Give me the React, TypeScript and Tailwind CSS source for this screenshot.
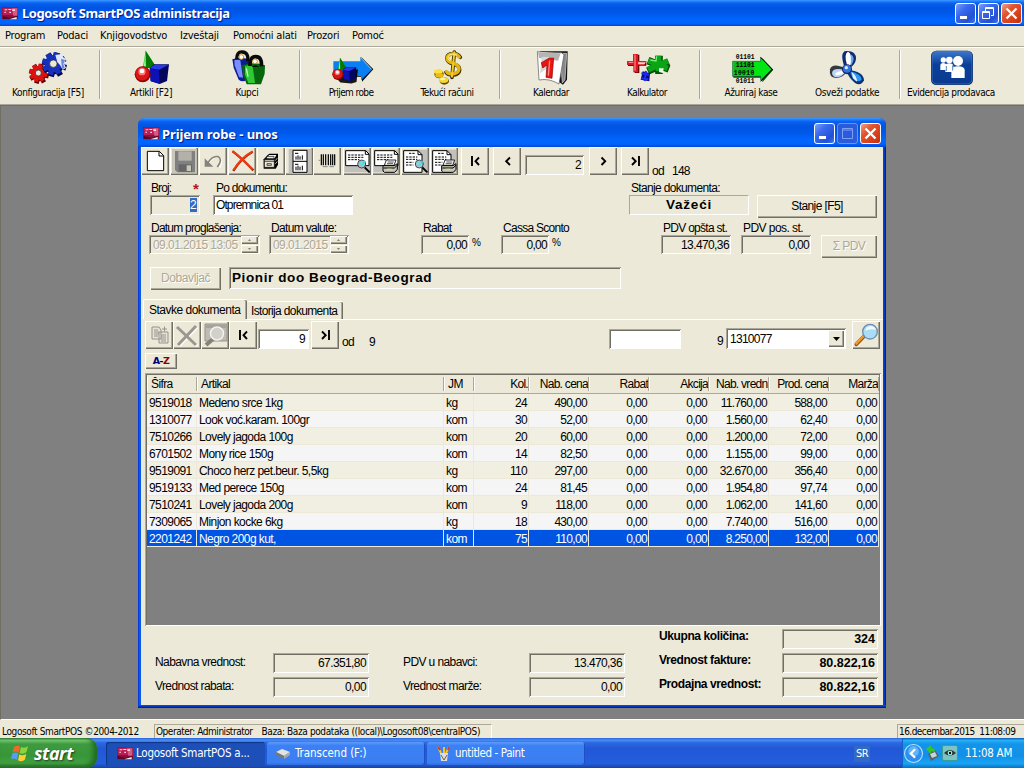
import React from "react";

type Kids = { children?: React.ReactNode };

const SUNK =
  "shadow-[inset_1px_1px_0_#aca899,inset_-1px_-1px_0_#fff,inset_2px_2px_0_#716f64]";
const RAISED =
  "bg-[#ece9d8] shadow-[inset_1px_1px_0_#fff,inset_-1px_-1px_0_#716f64,inset_-2px_-2px_0_#aca899]";
const TITLE =
  "bg-[linear-gradient(180deg,#3f97ff_0%,#1c7bff_6%,#0a5fec_13%,#0054e3_28%,#0057ea_50%,#0066ff_75%,#0064fb_90%,#0046d2_100%)]";
const SHADOWTXT = "[text-shadow:1px_1px_1px_#0a1883]";

/* ---------- small building blocks ---------- */

function Field({ cls = "", children }: Kids & { cls?: string }) {
  return (
    <div className={`shrink-0 flex items-center whitespace-pre leading-none ${SUNK} ${cls}`}>
      {children}
    </div>
  );
}

function Btn({ cls = "w-7 h-7", children }: Kids & { cls?: string }) {
  return (
    <button className={`shrink-0 flex items-center justify-center whitespace-nowrap leading-none ${RAISED} ${cls}`}>
      {children}
    </button>
  );
}

function IconBtn({ vb, cls = "w-7 h-7", children }: Kids & { vb: string; cls?: string }) {
  return (
    <Btn cls={cls}>
      <svg viewBox={vb} className="h-full w-full" preserveAspectRatio="none">
        {children}
      </svg>
    </Btn>
  );
}

function NavBtn({ kind }: { kind: "first" | "prev" | "next" | "last" }) {
  const left = kind === "first" || kind === "prev";
  return (
    <Btn>
      <svg viewBox="0 0 28 28" className="h-7 w-7" fill="none" stroke="#000" strokeWidth="1.9">
        {left ? (
          <path d={kind === "first" ? "M18 10.5L14.5 14.2 18 18" : "M17 10.5L13.2 14.2 17 18"} />
        ) : (
          <path d={kind === "last" ? "M11 10.5L14.7 14.2 11 18" : "M12.5 10.5L16.2 14.2 12.5 18"} />
        )}
        {kind === "first" && <path d="M11 9v10" />}
        {kind === "last" && <path d="M18 9v10" />}
      </svg>
    </Btn>
  );
}

function AppIcon({ cls }: { cls: string }) {
  return (
    <svg viewBox="0 0 48 39" className={`shrink-0 ${cls}`} preserveAspectRatio="none">
      <rect width="48" height="37" rx="3" fill="#8c0f3c" />
      <path d="M2 2h44v22H2z" fill="#b51f55" />
      <path d="M30 4h16v22H34z" fill="#d75a83" />
      <path d="M8 7h8v3H8zM19 6h9v3h-9zM7 14h5v3H7zM31 7h8v5h-8zM22 14h5v4h-5z" fill="#ffd9e6" />
      <path d="M2 26l22 7 22-7v10H2z" fill="#5a0723" />
      <path d="M24 36l20-6v7H24z" fill="#f3e9ee" />
    </svg>
  );
}

function CaptionButtons({ inner = false }: { inner?: boolean }) {
  const b = "w-[21px] h-[21px] rounded-[3px] border border-white flex";
  const blue = "bg-[linear-gradient(135deg,#7d9ff5_0%,#3a6af0_35%,#2350d4_75%,#3f78ee_100%)]";
  return (
    <div className="ml-auto flex gap-[2px]">
      <div className={`${b} ${blue}`}>
        <svg viewBox="0 0 19 19" className="h-full w-full"><path d="M4 12h7v3H4z" fill="#fff" /></svg>
      </div>
      {inner ? (
        <div className="flex h-[21px] w-[21px] rounded-[3px] border border-[#6f92ee] bg-[#2a5ade]">
          <svg viewBox="0 0 19 19" className="h-full w-full" fill="none" stroke="#7f9ff2"><path d="M4.5 4.5h10v10h-10zM4.5 6h10" /></svg>
        </div>
      ) : (
        <div className={`${b} ${blue}`}>
          <svg viewBox="0 0 19 19" className="h-full w-full" fill="none" stroke="#fff">
            <path d="M6.500 7V3.500h8v8H12M6.500 4.500h8M3.500 7.500h7v7h-7zM3.500 8.500h7" />
          </svg>
        </div>
      )}
      <div className={`${b} bg-[linear-gradient(135deg,#f0a088_0%,#e2532f_35%,#d13a14_80%,#b93010_100%)]`}>
        <svg viewBox="0 0 19 19" className="h-full w-full" stroke="#fff" strokeWidth="2.300"><path d="M4.500 4.500l10 10M14.500 4.500l-10 10" /></svg>
      </div>
    </div>
  );
}

/* ---------- main toolbar drawings ---------- */

const gear = (cx: number, cy: number, r: number, fill: string) => (
  <g>
    {[0, 45, 90, 135].map((a) => (
      <rect key={a} x={cx - r} y={cy - r * 0.23} width={r * 2} height={r * 0.46} fill={fill} transform={`rotate(${a + 15} ${cx} ${cy})`} />
    ))}
    <circle cx={cx} cy={cy} r={r * 0.77} fill={fill} />
    <circle cx={cx} cy={cy} r={r * 0.33} fill="#ece9d8" stroke="#222" strokeWidth="2" />
  </g>
);

const solids = (
  <g>
    <path d="M437 152l-8 48q18 10 37-3z" fill="#0cc90c" />
    <path d="M437 152l2 52q18 0 27-7z" fill="#067806" />
    <path d="M436 160l-4 38 5 2z" fill="#a8ffa8" />
    <path d="M449 204l12-11h46l-6 50-22 9-27-8z" fill="#05055e" />
    <path d="M449 206l28 5 2 40-27-8z" fill="#0c12b4" />
    <path d="M449 205l13-11h44l-28 15z" fill="#2539e8" />
    <circle cx="428" cy="223" r="24" fill="#8c0404" />
    <circle cx="427" cy="221" r="21" fill="#da1515" />
    <circle cx="426" cy="215" r="11" fill="#f77" />
    <circle cx="426" cy="213" r="7" fill="#fff" />
  </g>
);

const icons: Record<string, React.ReactNode> = {
  konf: (
    <>
      {gear(117, 221, 30, "#5c0000")}
      {gear(115, 219, 27, "#e01010")}
      {gear(163, 194, 37, "#050a4a")}
      {gear(160, 191, 34, "#1530bd")}
      <path d="M166 165l18-3 6 10 8 6-6 12 6 14-10 5-8-14-8-8z" fill="#dfe8ff" />
      <path d="M183 176l12 4-5 12 4 12-8 3z" fill="#6d86d8" />
    </>
  ),
  artikli: solids,
  kupci: (
    <>
      <path d="M697 178q25-9 50 0l3 14-10 47q-12 10-24 0l-15-36z" fill="#101d92" />
      <path d="M703 181q10-4 18 0l8 52-12-2-13-35z" fill="#7a8eff" />
      <path d="M710 178q0-24 17-22 20 2 16 28" fill="none" stroke="#0b0b0b" strokeWidth="10" />
      <circle cx="724" cy="171" r="7" fill="#fff" stroke="#d79a17" strokeWidth="3" />
      <path d="M726 196q35-12 69 0l-1 25-11 32h-43l-11-29z" fill="#06660b" />
      <path d="M735 198q11-4 23 0l7 51h-20l-10-25z" fill="#2fc936" />
      <path d="M739 205l5 25" stroke="#c4ffc0" strokeWidth="4" />
      <path d="M750 198q-1-28 17-28 20 0 17 29" fill="none" stroke="#0b0b0b" strokeWidth="11" />
      <circle cx="765" cy="184" r="7" fill="#fff" stroke="#d79a17" strokeWidth="3" />
      <path d="M754 201q12-10 24 0z" fill="#0a0a0a" />
    </>
  ),
  prijem: (
    <>
      <path d="M1005 188h79v-16l36 36-34 37v-15h-81z" fill="#000" />
      <path d="M1000 184h81v-14l36 38-34 33v-13h-83z" fill="#0a7ff2" />
      <path d="M1083 174l31 34" stroke="#78c2ff" strokeWidth="3" />
      <g transform="translate(714 67) scale(.7)">
        <g transform="translate(7 7)" opacity=".9"><path d="M449 204l58-10-6 55-22 6-47-4-20-22z" fill="#000" /></g>
        {solids}
      </g>
    </>
  ),
  tekuci: (
    <>
      <g fill="none" strokeLinecap="round">
        <path d="M181 172q-8-12-22-11-18 1-18 14t20 17q19 5 18 18-2 15-22 15-14 0-19-8M163 156l-7 76" stroke="#3b2c00" strokeWidth="11" />
        <path d="M178 171q-8-11-21-9-15 2-15 13t18 15q18 5 17 18-2 13-20 14-13 0-17-7" stroke="#e2b510" strokeWidth="10" />
        <path d="M163 157l-7 73" stroke="#f2cc27" strokeWidth="6" />
        <path d="M170 165q-14-6-23 1-8 9 3 17" stroke="#fff09a" strokeWidth="3" />
      </g>
      <ellipse cx="117" cy="222" rx="14" ry="13" fill="#6f5500" />
      <ellipse cx="115" cy="215" rx="13" ry="7" fill="#ffe03d" />
      <ellipse cx="118" cy="226" rx="12" ry="7" fill="#e6be18" />
      <ellipse cx="133" cy="243" rx="14" ry="11" fill="#5c4600" />
      <ellipse cx="131" cy="240" rx="14" ry="9" fill="#f7d632" />
      <ellipse cx="128" cy="237" rx="8" ry="4" fill="#fff5a8" />
    </>
  ),
  kalendar: (
    <>
      <path d="M420 154h83l-2 85-12 15-12-8z" fill="#111" />
      <path d="M480 160h20l-5 80-8 9z" fill="#888" stroke="#ddd" strokeWidth="2" />
      <path d="M412 155l72 3 8 6-15 88q-30-18-60-12z" fill="#fff" stroke="#555" strokeWidth="2" />
      <path d="M414 157l68 3-8 22-57-8z" fill="#b4b4b4" />
      <path d="M425 170l35 2-10 28-30 20z" fill="#d7d7d7" />
      <path d="M424 188l24-14h13l-5 61-18-3 3-37-13 9z" fill="#e8140f" stroke="#8d0000" strokeWidth="2" />
      <path d="M449 182l-4 45" stroke="#ff8b80" strokeWidth="4" />
    </>
  ),
  kalkulator: (
    <>
      <path d="M703 164h15v20h21v13h-21v22h-14v-21h-20v-13h20z" fill="#6e0000" />
      <path d="M699 162h15v21h20v12h-20v22h-14v-22h-19v-12h18z" fill="#df1720" />
      <path d="M705 164v48M686 187h14" stroke="#ff9ca0" strokeWidth="3" />
      <path d="M714 187h24l-5 6h-18z" fill="#ffd0d0" />
      <g stroke="#045007" strokeWidth="23"><path d="M777 167v55M744 182l63 25M743 213l63-27" /></g>
      <g stroke="#0aa514" strokeWidth="17"><path d="M775 167v46M745 182l58 23M744 209l60-26" /></g>
      <path d="M770 169l-2 14-17-3" stroke="#74ef74" strokeWidth="4" fill="none" />
      <path d="M777 205h14l-2 14-12-3z" fill="#e8ffe8" />
      <path d="M728 214l22 6-2 24-26-5z" fill="#08087a" />
      <path d="M724 220l23 4M723 235l22 3M738 213l-4 30" stroke="#1d2bf0" strokeWidth="6" />
    </>
  ),
  azuriraj: (
    <>
      <path d="M100 187h87v-12l33 34-33 38v-14h-87z" fill="#0a4f0a" />
      <path d="M98 184h84v-12l33 36-33 33v-12H98z" fill="#00e613" stroke="#053" strokeWidth="2" />
      <path d="M182 172l35 36-35 36" fill="none" stroke="#000" strokeWidth="3" />
      <path d="M102 187h60v32h-60z" fill="#14961c" opacity=".55" />
      <g fill="#000" fontFamily="Liberation Mono" fontWeight="700" fontSize="19">
        <text x="107" y="176" textLength="57">01101</text>
        <text x="107" y="200" textLength="57">11101</text>
        <text x="101" y="224" textLength="62">10010</text>
        <text x="107" y="248" textLength="57">01011</text>
      </g>
    </>
  ),
  osvezi: (
    <>
      <path d="M434 203q-16-45 3-50 32-2 31 24-2 16-19 28z" fill="#0d2c72" />
      <path d="M441 195q-10-34 3-40 14 6 8 40z" fill="#fff" />
      <path d="M452 163q17 9 1 34z" fill="#69a7f0" />
      <path d="M436 205q-39-18-46 3-4 25 18 26 20 0 31-17z" fill="#34383f" />
      <path d="M432 209q-35-6-36 10 1 15 20 12 14-4 20-15z" fill="#bcd5f5" />
      <path d="M430 212q-22 2-25 11 15 8 29-8z" fill="#fff" />
      <path d="M446 210q45 5 46 31-10 20-28 7-17-14-23-31z" fill="#0d3375" />
      <path d="M449 213q36 9 36 26-14 11-26-3z" fill="#2b9bf5" />
      <path d="M455 216q16 12 16 29l-12-11z" fill="#eaf6ff" />
      <circle cx="441" cy="208" r="15" fill="#0b276d" />
      <circle cx="441" cy="206" r="12" fill="#3373dc" />
      <circle cx="439" cy="203" r="5" fill="#d8ecff" />
    </>
  ),
  evidencija: (
    <>
      <defs>
        <linearGradient id="ev" x1="0" y1="0" x2="0" y2="1">
          <stop offset="0" stopColor="#3c76cc" /><stop offset=".4" stopColor="#0b4098" /><stop offset="1" stopColor="#0a3a90" />
        </linearGradient>
      </defs>
      <rect x="693" y="152" width="126" height="103" rx="16" fill="#05245f" />
      <rect x="696" y="154" width="120" height="98" rx="14" fill="url(#ev)" stroke="#4b83cc" strokeWidth="2" />
      <g fill="#fff">
        <circle cx="730" cy="180" r="8" /><path d="M721 210v-13q0-8 9-8t9 8v13z" />
        <circle cx="748" cy="180" r="10" /><path d="M736 216v-17q0-9 12-9t12 9v17z" />
        <circle cx="774" cy="183" r="15" /><path d="M754 234v-23q0-12 20-12t20 12v23z" />
      </g>
      <path d="M739 198v15M758 196v16" stroke="#0b4098" strokeWidth="2" />
    </>
  ),
};

const tools: { id: string; label: string; vb: string; track: string; sep?: string }[] = [
  { id: "konf", label: "Konfiguracija [F5]", vb: "0 150 288 105", track: "tracking-[-0.4px]", sep: "ml-[3px]" },
  { id: "artikli", label: "Artikli [F2]", vb: "309 150 288 105", track: "tracking-[-0.4px]" },
  { id: "kupci", label: "Kupci", vb: "597 150 288 105", track: "tracking-[-0.3px]", sep: "ml-[4px]" },
  { id: "prijem", label: "Prijem robe", vb: "909 150 288 105", track: "tracking-[-0.6px]" },
  { id: "tekuci", label: "Tekući računi", vb: "-3 150 288 105", track: "tracking-[-0.4px]", sep: "ml-[4px]" },
  { id: "kalendar", label: "Kalendar", vb: "309 150 288 105", track: "tracking-[-0.5px]" },
  { id: "kalkulator", label: "Kalkulator", vb: "597 150 288 105", track: "tracking-[-0.5px]", sep: "ml-[4px]" },
  { id: "azuriraj", label: "Ažuriraj kase", vb: "9 150 288 105", track: "tracking-[-0.4px]" },
  { id: "osvezi", label: "Osveži podatke", vb: "297 150 288 105", track: "tracking-[-0.35px]", sep: "ml-[4px]" },
  { id: "evidencija", label: "Evidencija prodavaca", vb: "609 150 288 105", track: "tracking-[-0.4px]" },
];

/* ---------- document toolbar drawings ---------- */

const lens = (x: number, y: number) => (
  <g transform={`translate(${x} ${y})`}>
    <path d="M9 10l15 15" stroke="#000" strokeWidth="6" />
    <circle r="12" fill="#a9c7cc" stroke="#444" strokeWidth="3" />
    <path d="M-8-2l5-5M-3 6l9-9M3-8h5v5" stroke="#2ee8f5" strokeWidth="4" />
  </g>
);
const printer = (x: number, y: number) => (
  <g transform={`translate(${x} ${y})`}>
    <path d="M10 0h29l-6 16H4z" fill="#fff" stroke="#000" strokeWidth="2.500" />
    <path d="M14 6h18M12 11h18" stroke="#000" strokeWidth="2" />
    <path d="M0 17h34l9-6v17l-8 9H4l-4-4z" fill="#c8c6bd" stroke="#000" strokeWidth="3" />
    <path d="M2 24h32M34 24l9-8" stroke="#000" strokeWidth="3" />
    <path d="M12 28h14" stroke="#ede81d" strokeWidth="4" />
  </g>
);
const sheet = (x: number, wide: boolean) => (
  <g transform={`translate(${x} 0)`}>
    <path d="M4 104h74v68H4z" fill="#c1c0bc" />
    {wide ? (
      <path d="M8 107h60l10 10v35H8z" fill="#fff" stroke="#000" strokeWidth="3" />
    ) : (
      <path d="M8 107h43l12 12v53H8z" fill="#fff" stroke="#000" strokeWidth="3" />
    )}
    <path d={wide ? "M67 107v11h11" : "M51 107v12h12"} fill="none" stroke="#000" strokeWidth="3" />
    <path d={wide ? "M15 120h46M15 127h46M15 134h34" : "M24 115h20M15 126h34M15 133h34M15 142h22M15 150h22"} stroke="#000" strokeWidth="3" strokeDasharray="7 3" />
  </g>
);

function DocToolbar() {
  return (
    <div className="flex h-[33px] items-start">
      <IconBtn vb="15 96 84 84"><path d="M34 109h36l13 13v45H34z" fill="#fff" stroke="#000" strokeWidth="3" /><path d="M69 109v14h14" fill="none" stroke="#000" strokeWidth="3" /></IconBtn>
      <IconBtn cls="ml-px w-7 h-7" vb="102 96 84 84">
        <path d="M108 102h74v73h-74z" fill="#c9c7ba" /><path d="M117 108h60v64h-53l-7-7z" fill="#808080" />
        <path d="M127 109h40v28h-40z" fill="#b3b1a8" /><path d="M128 148h40v22h-40z" fill="#666" /><path d="M152 151h13v17h-13z" fill="#c9c7ba" />
      </IconBtn>
      <IconBtn cls="ml-px w-7 h-7" vb="189 96 84 84"><path d="M217 147q14-25 32-21 14 9 2 32" fill="none" stroke="#fff" strokeWidth="4" /><path d="M215 145q14-24 32-20 14 9-3 31" fill="none" stroke="#85837a" strokeWidth="5" /><path d="M206 130v25h26z" fill="#85837a" /></IconBtn>
      <IconBtn cls="ml-px w-7 h-7" vb="276 96 84 84"><path d="M290 109q29 22 62 57M350 110q-36 20-58 58" fill="none" stroke="#8e1c00" strokeWidth="7" /><path d="M289 108q29 22 61 56M350 109q-36 20-58 57" fill="none" stroke="#f23b10" strokeWidth="6" /></IconBtn>
      <IconBtn cls="ml-px w-7 h-7" vb="363 96 84 84">
        <path d="M395 120l5-4h26v33l-7 12h-36v-28z" fill="#000" /><path d="M399 120h22l-5 10h-22z" fill="#fff" /><path d="M392 124h22v7h-22z" fill="#ece9d8" stroke="#000" strokeWidth="2" /><path d="M385 134h30v23h-30z" fill="#ece9d8" stroke="#000" strokeWidth="2" /><path d="M418 137l6-8M418 147l6-8" stroke="#fff" strokeWidth="2" /><path d="M385 139h29M393 146h13v5h-13z" stroke="#000" strokeWidth="2" fill="none" />
      </IconBtn>
      <IconBtn vb="447 96 84 84">
        <path d="M458 102h68v74h-68z" fill="#c1c0bc" /><path d="M471 106h42v66h-42z" fill="#fff" stroke="#000" strokeWidth="3" /><path d="M471 139h42" stroke="#000" strokeWidth="3" /><path d="M477 115h10M477 148h10" stroke="#000" strokeWidth="3" /><path d="M480 124v10M486 121v13M492 124v10M499 121v13M480 155v11M486 152v14M492 155v11M499 152v14" stroke="#000" strokeWidth="3" />
      </IconBtn>
      <IconBtn cls="w-7 h-7" vb="531 96 84 84">
        <path d="M556 118v33M562 118v33M569 118v33M577 118v33M584 118v33M590 118v33M596 118v33" stroke="#000" strokeWidth="3.600" /><path d="M548 136h5M560 155h15M580 155h14" stroke="#888" strokeWidth="3" />
      </IconBtn>
      <IconBtn cls="ml-[2px] w-7 h-7" vb="621 96 84 84">{sheet(621, true)}{lens(677, 147)}</IconBtn>
      <IconBtn cls="ml-px w-7 h-7" vb="708 96 84 84">{sheet(708, true)}{printer(741, 135)}</IconBtn>
      <IconBtn cls="ml-px w-7 h-7" vb="33 96 84 84">{sheet(33, false)}{lens(88, 147)}</IconBtn>
      <IconBtn cls="ml-px w-7 h-7" vb="120 96 84 84">{sheet(120, false)}{printer(155, 135)}</IconBtn>
      <div className="ml-[3px]"><NavBtn kind="first" /></div>
      <div className="ml-1"><NavBtn kind="prev" /></div>
      <Field cls="ml-1 mt-2 h-5 w-[59px] justify-end pr-[3px]">2</Field>
      <div className="ml-[5px]"><NavBtn kind="next" /></div>
      <div className="ml-1"><NavBtn kind="last" /></div>
      <span className="ml-[3px] mt-[18px] leading-none whitespace-pre">od</span>
      <span className="ml-[8px] mt-[18px] leading-none">148</span>
    </div>
  );
}

function Spinner() {
  return (
    <div className="ml-auto mr-[2px] flex flex-col gap-px">
      <div className={`flex h-[8px] w-[17px] items-center justify-center ${RAISED}`}>
        <svg viewBox="0 0 5 3" className="h-[2px] w-[5px]"><path d="M2.500 0L5 3H0z" fill="#888577" /></svg>
      </div>
      <div className={`flex h-[8px] w-[17px] items-center justify-center ${RAISED}`}>
        <svg viewBox="0 0 5 3" className="h-[2px] w-[5px]"><path d="M2.500 3L5 0H0z" fill="#888577" /></svg>
      </div>
    </div>
  );
}

function Labeled({ label, cls = "", lcls = "", children }: Kids & { label: React.ReactNode; cls?: string; lcls?: string }) {
  return (
    <div className={`shrink-0 ${cls}`}>
      <div className={`flex h-4 items-center whitespace-nowrap leading-none ${lcls}`}>{label}</div>
      {children}
    </div>
  );
}

/* ---------- item grid ---------- */

const COLS =
  "grid grid-cols-[50px_247px_30px_55px_60px_60px_60px_60px_60px_50px]";
const heads = ["Šifra", "Artikal", "JM", "Kol.", "Nab. cena", "Rabat", "Akcija", "Nab. vredn", "Prod. cena", "Marža"];
const rows: string[][] = [
  ["9519018", "Medeno srce 1kg", "kg", "24", "490,00", "0,00", "0,00", "11.760,00", "588,00", "0,00"],
  ["1310077", "Look voć.karam. 100gr", "kom", "30", "52,00", "0,00", "0,00", "1.560,00", "62,40", "0,00"],
  ["7510266", "Lovely jagoda 100g", "kom", "20", "60,00", "0,00", "0,00", "1.200,00", "72,00", "0,00"],
  ["6701502", "Mony rice 150g", "kom", "14", "82,50", "0,00", "0,00", "1.155,00", "99,00", "0,00"],
  ["9519091", "Choco herz pet.beur. 5,5kg", "kg", "110", "297,00", "0,00", "0,00", "32.670,00", "356,40", "0,00"],
  ["9519133", "Med perece 150g", "kom", "24", "81,45", "0,00", "0,00", "1.954,80", "97,74", "0,00"],
  ["7510241", "Lovely jagoda 200g", "kom", "9", "118,00", "0,00", "0,00", "1.062,00", "141,60", "0,00"],
  ["7309065", "Minjon kocke 6kg", "kg", "18", "430,00", "0,00", "0,00", "7.740,00", "516,00", "0,00"],
  ["2201242", "Negro 200g kut,", "kom", "75", "110,00", "0,00", "0,00", "8.250,00", "132,00", "0,00"],
];

function ItemGrid() {
  return (
    <div className={`ml-1 h-[253px] w-[736px] bg-[#808080] p-[2px] ${SUNK}`}>
      <div className={`${COLS} h-[19px] border-b border-[#aca899] bg-[#ece9d8]`}>
        {heads.map((h, i) => (
          <div key={h} className={`my-[2px] flex items-center overflow-hidden whitespace-nowrap border-r border-[#aca899] leading-none shadow-[inset_1px_0_0_#fff] ${i < 3 ? "pl-1 tracking-[-0.6px]" : i === 7 ? "pl-[7px]" : "justify-end"}`}>
            {h}
          </div>
        ))}
      </div>
      {rows.map((r, n) => {
        const sel = n === 8;
        return (
          <div key={r[0]} className={`${COLS} h-[17px] ${sel ? "bg-[#0054e3] text-white" : n % 2 ? "bg-[#f5f5f5]" : "bg-[#f1efe2]"}`}>
            {r.map((c, i) => (
              <div key={i} className={`flex items-center whitespace-nowrap border-b border-r border-[#ece9d8] pt-[2px] leading-none ${i < 3 ? "pl-[2px]" : "justify-end pr-px"} ${i < 3 ? "tracking-[-0.57px]" : "tracking-[-0.68px]"}`}>
                {c}
              </div>
            ))}
          </div>
        );
      })}
    </div>
  );
}

function ItemPanel() {
  return (
    <>
      <div className="flex h-5 items-end pl-[2px]">
        <div className="flex h-5 w-[104px] items-center rounded-t-[2px] border-l border-t border-white pl-[5px] leading-none tracking-[-0.5px] shadow-[inset_-1px_0_0_#716f64,inset_-2px_0_0_#aca899]">Stavke dokumenta</div>
        <div className="flex h-[18px] w-[96px] items-center rounded-t-[2px] border-t border-white pl-[4px] leading-none tracking-[-0.65px] shadow-[inset_-1px_0_0_#716f64,inset_-2px_0_0_#aca899]">Istorija dokumenta</div>
      </div>
      <div className="flex h-px pl-[2px]"><div className="ml-[104px] flex-1 bg-white" /></div>
      <div className="flex h-8 pl-1 pt-px">
        <IconBtn vb="0 0 28 28"><path d="M7 6h7l2 3v9H7zM14 11h9v11h-9z" fill="#e5e3d8" stroke="#96938a" /><path d="M9 9h4M9 11h5M9 13h5M9 15h4M16 14h5M16 16h5M16 18h5M16 20h5M17 8h5M19.500 5.500v5" stroke="#96938a" /></IconBtn>
        <IconBtn vb="0 0 28 28"><path d="M5 7l19 18M24 6L6 25" stroke="#fff" strokeWidth="3" /><path d="M4 6l19 18M23 5L5 24" stroke="#9a988e" strokeWidth="3" /></IconBtn>
        <IconBtn vb="0 0 28 28"><path d="M4 3h22v17H4z" fill="#bdbbb2" stroke="#95938b" /><path d="M5 4h20v3H5z" fill="#a5a39b" /><path d="M12 18l-7 6" stroke="#858379" strokeWidth="4" /><circle cx="16" cy="12.500" r="6.500" fill="#d2d0c9" stroke="#f3f2ed" strokeWidth="1.500" /></IconBtn>
        <NavBtn kind="first" />
        <Field cls="ml-px mt-2 h-5 w-[51px] justify-end bg-white pr-1">9</Field>
        <div className="ml-[2px]"><NavBtn kind="last" /></div>
        <span className="ml-[3px] mt-[15px] w-[27px] leading-none">od</span>
        <span className="mt-[15px] w-[7px] leading-none">9</span>
        <Field cls="ml-[233px] mt-2 h-[20px] w-[72px] bg-white" />
        <span className="ml-9 mt-[14px] w-[9px] leading-none">9</span>
        <Field cls="mt-[7px] h-[21px] w-[120px] bg-white pl-1">
          1310077
          <div className={`ml-auto mr-[2px] flex h-[17px] w-[16px] items-center justify-center ${RAISED}`}>
            <svg viewBox="0 0 7 4" className="h-1 w-[7px]"><path d="M0 0h7L3.500 4z" fill="#000" /></svg>
          </div>
        </Field>
        <IconBtn cls="ml-[6px] w-7 h-7" vb="1026 93 84 84">
          <path d="M1063 138l-24 25" stroke="#8a4a10" strokeWidth="11" strokeLinecap="round" />
          <path d="M1061 138l-22 23" stroke="#f29a2e" strokeWidth="7" strokeLinecap="round" />
          <circle cx="1080" cy="125" r="22" fill="#a9dcf5" stroke="#6b8fb0" strokeWidth="4" />
          <path d="M1066 122q2-14 18-14 12 2 14 12-16-6-32 2z" fill="#effaff" />
        </IconBtn>
      </div>
      <div className="flex h-[21px] pl-1">
        <Btn cls="w-8 h-4 mt-px font-['DejaVu_Sans'] text-[9.500px] font-bold tracking-[-0.6px]">
          <span className="text-[#00007b]">A</span><span>-</span><span className="text-[#8b0000]">Z</span>
        </Btn>
      </div>
    </>
  );
}

function Totals() {
  const f = "h-5 w-[96px] justify-end pr-[3px] tracking-[-0.6px]";
  const b = "h-5 w-[96px] justify-end pr-[3px] font-bold text-[12.500px] tracking-[0px]";
  const l = "leading-none whitespace-nowrap pb-[3px] tracking-[-0.6px]";
  const lb = "leading-none whitespace-nowrap pb-[6px] tracking-[-0.4px]";
  return (
    <div className="grid grid-cols-[118px_130px_126px_130px_123px_96px] items-center gap-y-1 pl-[14px] pt-[3px]">
      <span /><span /><span /><span /><b className={lb}>Ukupna količina:</b><Field cls={b}>324</Field>
      <span className={l}>Nabavna vrednost:</span><Field cls={f}>67.351,80</Field>
      <span className={l}>PDV u nabavci:</span><Field cls={f}>13.470,36</Field>
      <b className={lb}>Vrednost fakture:</b><Field cls={b}>80.822,16</Field>
      <span className={l}>Vrednost rabata:</span><Field cls={f}>0,00</Field>
      <span className={l}>Vrednost marže:</span><Field cls={f}>0,00</Field>
      <b className={lb}>Prodajna vrednost:</b><Field cls={b}>80.822,16</Field>
    </div>
  );
}

function Dialog() {
  return (
    <div className="ml-[138px] mt-3 flex h-[590px] w-[748px] flex-col rounded-t-[7px] bg-[linear-gradient(90deg,#0831d9_0,#0a5cf0_2px,#0054e3_50%,#0046d0_746px,#00138c_748px)] font-['Liberation_Sans',sans-serif] text-[12px] tracking-[-0.72px] text-black">
      <div className={`flex h-[29px] shrink-0 items-center rounded-t-[7px] pl-[5px] pr-[5px] ${TITLE}`}>
        <AppIcon cls="mt-[2px] h-[13px] w-4" />
        <span className={`ml-[3px] mt-[3px] font-['Noto_Sans',sans-serif] text-[13px] font-bold leading-none tracking-[-0.1px] text-white ${SHADOWTXT}`}>Prijem robe - unos</span>
        <div className="ml-auto mt-px"><CaptionButtons inner /></div>
      </div>
      <div className="mx-[3px] h-[558px] shrink-0 bg-[#ece9d8]">
        <DocToolbar />
        <div className="flex h-[39px] pl-[9px]">
          <Labeled cls="w-[63px]" lcls="pl-px" label={<><span className="tracking-[-0.9px]">Broj:</span><span className="ml-auto mr-[15px] h-4 text-[15px] font-bold leading-[17px] text-[#b01818]">*</span></>}>
            <Field cls="-mt-px h-5 w-[50px] justify-end pr-[3px]"><span className="bg-[#316ac5] py-px pr-px text-white">2</span></Field>
          </Labeled>
          <Labeled cls="w-[416px]" lcls="pl-[3px] tracking-[-0.75px]" label="Po dokumentu:">
            <Field cls="-mt-px h-5 w-[140px] bg-white pl-[3px] tracking-[-0.9px]">Otpremnica 01</Field>
          </Labeled>
          <Labeled cls="w-[128px]" lcls="pl-[2px] tracking-[-0.66px]" label="Stanje dokumenta:">
            <div className="-mt-px flex h-5 w-[120px] items-center justify-center border border-b-white border-l-[#aca899] border-r-white border-t-[#aca899] font-['Liberation_Sans'] text-[13.500px] font-bold leading-none tracking-[0.8px]">Važeći</div>
          </Labeled>
          <Btn cls="mt-[15px] h-[23px] w-[120px] tracking-[-0.6px] pb-[2px]">Stanje [F5]</Btn>
        </div>
        <div className="flex h-[44px] pl-2">
          <Labeled cls="w-[120px]" lcls="pl-[2px] tracking-[-0.78px] mt-px h-[15px]" label="Datum proglašenja:">
            <Field cls="h-[19px] w-[111px] pl-1 text-[#aca899] tracking-[-0.55px]"><span className="[text-shadow:1px_1px_0_#fff]">09.01.2015 13:05</span><Spinner /></Field>
          </Labeled>
          <Labeled cls="w-[152px]" lcls="pl-[2px] mt-px h-[15px] tracking-[-0.66px]" label="Datum valute:">
            <Field cls="h-[19px] w-[80px] pl-1 text-[#aca899] tracking-[-0.55px]"><span className="[text-shadow:1px_1px_0_#fff]">09.01.2015</span><Spinner /></Field>
          </Labeled>
          <Labeled cls="w-[80px]" lcls="pl-[2px] mt-px h-[15px]" label="Rabat">
            <div className="flex"><Field cls="h-[19px] w-[48px] justify-end pr-[2px]">0,00</Field><span className="ml-[3px] text-[10px] leading-[16px]">%</span></div>
          </Labeled>
          <Labeled cls="w-[160px]" lcls="pl-[2px] mt-px h-[15px]" label="Cassa Sconto">
            <div className="flex"><Field cls="h-[19px] w-[48px] justify-end pr-[2px]">0,00</Field><span className="ml-[3px] text-[10px] leading-[16px]">%</span></div>
          </Labeled>
          <Labeled cls="w-[80px]" lcls="pl-[2px] mt-px h-[15px]" label="PDV opšta st.">
            <Field cls="h-[19px] w-[70px] justify-end pr-[2px] tracking-[-0.6px]">13.470,36</Field>
          </Labeled>
          <Labeled cls="w-[80px]" lcls="pl-[2px] mt-px h-[15px] tracking-[-0.55px]" label="PDV pos. st.">
            <Field cls="h-[19px] w-[70px] justify-end pr-[2px]">0,00</Field>
          </Labeled>
          <Btn cls="mt-4 h-[23px] w-14 text-[#aca899] tracking-[-0.6px] pb-[2px] [text-shadow:1px_1px_0_#fff]">Σ PDV</Btn>
        </div>
        <div className="flex h-[36px] items-start pl-[9px] pt-1">
          <Btn cls="h-[23px] w-[71px] pb-[2px] text-[#aca899] tracking-[-0.4px] [text-shadow:1px_1px_0_#fff]">Dobavljač</Btn>
          <Field cls="ml-2 h-[22px] w-[392px] pl-[3px] text-[13.500px] font-bold tracking-[0.6px]">Pionir doo Beograd-Beograd</Field>
        </div>
        <ItemPanel />
        <ItemGrid />
        <Totals />
      </div>
      <div className="h-[3px] bg-[linear-gradient(180deg,#0a50e8,#0030b8_60%,#00138c)]" />
    </div>
  );
}

/* ---------- shell ---------- */

function Menu() {
  const items: [string, string][] = [
    ["Program", "w-[52px]"], ["Podaci", "w-[43px]"], ["Knjigovodstvo", "w-20"], ["Izveštaji", "w-[53px]"],
    ["Pomoćni alati", "w-[74px]"], ["Prozori", "w-[45px]"], ["Pomoć", "w-[40px]"],
  ];
  return (
    <div className="flex h-5 items-center bg-[#ece9d8] pb-[2px] pl-[5px] text-[11px] tracking-[-0.2px]">
      {items.map(([t, w]) => <span key={t} className={`${w} whitespace-nowrap leading-none`}>{t}</span>)}
    </div>
  );
}

function Taskbar() {
  const task = "flex h-6 shrink-0 items-center rounded-[3px] whitespace-nowrap text-[11.500px] leading-none text-white";
  const idle = "bg-[linear-gradient(180deg,#5f9bff_0,#3c81f3_15%,#3a7ef2_85%,#2a66dc_100%)] shadow-[inset_-1px_-1px_0_#1f4fc0]";
  return (
    <div className="flex h-[30px] bg-[linear-gradient(180deg,#2a62d8_0,#4a8ef4_7%,#2c68e2_16%,#2257d6_35%,#245edc_85%,#1941a5_100%)] font-['DejaVu_Sans_Condensed','DejaVu_Sans',sans-serif]">
      <div className="flex h-[30px] w-[97px] shrink-0 items-center rounded-r-[10px] bg-[linear-gradient(180deg,#2f7d2f_0,#6fc56f_8%,#3f9a3f_20%,#379637_60%,#43a243_85%,#2a7528_100%)] pl-[11px] shadow-[inset_-4px_-2px_5px_#226b22]">
        <svg viewBox="0 0 18 18" className="h-[18px] w-[18px]">
          <path d="M3 3q4-3 6 0L7.500 9Q5 6.500 1.500 8.500z" fill="#f3672a" />
          <path d="M10 3q4 2 7-1l-1.500 6q-3 3-7 1z" fill="#8bd43a" />
          <path d="M1.200 9.700q4-2.500 6 .2L5.700 16Q4 13.500 0 15z" fill="#5a9cf5" />
          <path d="M8.300 10.200q3 2.500 7-.5L14 15.500q-3 3-7 .8z" fill="#fbd034" />
        </svg>
        <span className="ml-[5px] font-['Open_Sans',sans-serif] text-[18px] font-bold italic leading-none tracking-[-0.5px] text-white [text-shadow:1px_1px_2px_#1c3c1c]">start</span>
      </div>
      <div className="flex flex-1 items-center pl-[9px] pt-px">
        <div className={`${task} w-[159px] bg-[#1c4fb8] pl-[11px] shadow-[inset_1px_1px_1px_#0f3588]`}>
          <AppIcon cls="h-[13px] w-4" /><span className="ml-[3px] tracking-[-0.25px]">Logosoft SmartPOS a...</span>
        </div>
        <div className={`${task} ml-[2px] w-[158px] pl-[8px] ${idle}`}>
          <svg viewBox="0 0 16 12" className="h-3 w-4"><path d="M1 4l6-3 8 3-6 4z" fill="#e3e3e3" /><path d="M1 4l8 4v3L1 7z" fill="#777" /><path d="M9 8l6-4v3l-6 4z" fill="#a9a9a9" /></svg>
          <span className="ml-1 tracking-[-0.05px]">Transcend (F:)</span>
        </div>
        <div className={`${task} ml-[2px] w-[158px] pl-[10px] ${idle}`}>
          <svg viewBox="0 0 14 16" className="h-4 w-[14px]"><path d="M4 7l-3-6M7 7V1M9 7l3-6" stroke="#f5c22d" strokeWidth="2" /><path d="M1 1l2 3M12 1l-1 3" stroke="#d83a1c" strokeWidth="2" /><path d="M3 7h8l-1 8H4z" fill="#d9dde4" /><path d="M4 9l3 5 3-5" stroke="#8a5a2a" fill="none" /></svg>
          <span className="ml-1 tracking-[-0.4px]">untitled - Paint</span>
        </div>
        <span className="ml-auto mr-[32px] flex h-4 w-4 items-center justify-center bg-[#316ac5] text-[11px] leading-none tracking-[-0.5px] text-white">SR</span>
      </div>
      <div className="flex w-[122px] shrink-0 items-center border-l border-[#0f63c8] bg-[linear-gradient(180deg,#0c59b9_0,#26b0f5_8%,#1394ea_20%,#1290e8_60%,#18a4f3_85%,#0d6fc0_100%)]">
        <svg viewBox="0 0 18 18" className="ml-px h-[19px] w-[19px]"><circle cx="9" cy="9" r="8.500" fill="#2a8ff0" stroke="#bfe3ff" /><circle cx="9" cy="7" r="5" fill="#5fb4fa" /><path d="M10.500 5L6.500 9l4 4" fill="none" stroke="#fff" strokeWidth="2" /></svg>
        <svg viewBox="0 0 14 16" className="ml-[2px] h-4 w-[14px]"><path d="M3 9l7-4 4 6-8 5z" fill="#59626b" /><path d="M5 9l5-2 2 4-5 2z" fill="#c9d3db" /><path d="M1 4l5-4v3q4 0 4 4L6 6v3z" fill="#35c72a" /></svg>
        <svg viewBox="0 0 16 16" className="ml-[3px] h-4 w-4"><rect width="16" height="16" rx="2" fill="#3a9c9c" /><rect x="1" y="1" width="14" height="14" rx="1" fill="#7cc4c0" /><path d="M2 8q6-6 12 0-6 5-12 0z" fill="#333" /><circle cx="8" cy="8" r="2.300" fill="#9ff" /><circle cx="8" cy="8" r="1.200" fill="#000" /></svg>
        <span className="ml-[7px] mt-[2px] whitespace-nowrap text-[11.500px] leading-none tracking-[-0.25px] text-white">11:08 AM</span>
      </div>
    </div>
  );
}

export default function App() {
  return (
    <div className="flex h-[768px] w-[1024px] flex-col overflow-hidden bg-[#ece9d8] font-['DejaVu_Sans_Condensed','DejaVu_Sans',sans-serif] text-black">
      <div className={`flex h-[26px] shrink-0 items-center pl-[2px] pr-[2px] ${TITLE}`}>
        <AppIcon cls="h-[13px] w-4" />
        <span className={`ml-[4px] mt-px font-['Noto_Sans',sans-serif] text-[13px] font-bold leading-none tracking-[-0.42px] text-white ${SHADOWTXT}`}>Logosoft SmartPOS administracija</span>
        <CaptionButtons />
      </div>
      <Menu />
      <div className="flex h-[59px] shrink-0 border-y border-[#aca899] pt-[3px] shadow-[inset_0_1px_0_#fff]">
        {tools.map((t) => (
          <React.Fragment key={t.id}>
            <button className="flex w-24 shrink-0 flex-col items-center">
              <svg viewBox={t.vb} className="h-[35px] w-24">{icons[t.id]}</svg>
              <span className={`mt-[2px] whitespace-nowrap text-[10px] leading-[12px] ${t.track}`}>{t.label}</span>
            </button>
            {t.sep && <div className={`${t.sep} mr-[2px] h-[49px] w-[2px] shrink-0 border-l border-r border-l-[#aca899] border-r-white`} />}
          </React.Fragment>
        ))}
      </div>
      <div className="flex h-[615px] shrink-0 border-b border-l border-b-white border-l-[#716f64] bg-[#808080] shadow-[inset_0_1px_0_#716f64]">
        <div className="-ml-px mt-px h-fit w-full"><Dialog /></div>
      </div>
      <div className="flex h-[18px] shrink-0 items-end text-[10px] leading-none tracking-[-0.38px]">
        <span className="w-[154px] whitespace-nowrap pb-px pl-[2px]">Logosoft SmartPOS ©2004-2012</span>
        <div className="flex h-[14px] w-[338px] items-center whitespace-pre border-l border-r border-t border-l-[#aca899] border-r-white border-t-[#aca899] pl-px">
          <span className="tracking-[-0.47px]">Operater: Administrator</span><span className="ml-[9px]">Baza: Baza podataka ((local)\Logosoft08\centralPOS)</span>
        </div>
        <div className="ml-auto flex h-[14px] w-[127px] items-center whitespace-pre border-l border-t border-[#aca899] pl-px tracking-[-0.55px]">16.decembar.2015  11:08:09</div>
      </div>
      <Taskbar />
    </div>
  );
}
